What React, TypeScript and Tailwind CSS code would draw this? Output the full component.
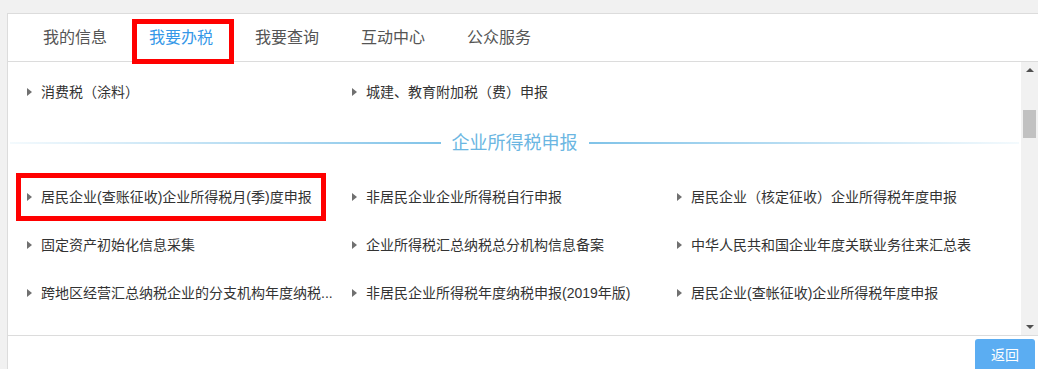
import React from "react";

const font = { fontFamily: '"Liberation Sans", "Noto Sans CJK SC", sans-serif' };

const tabs = ["我的信息", "我要办税", "我要查询", "互动中心", "公众服务"];

function Arrow() {
  return (
    <span className="w-0 h-0 shrink-0 border-y-[4px] border-y-transparent border-l-[5px] border-l-[#707070]" />
  );
}

function Cell({ text, marked = false }: { text: string; marked?: boolean }) {
  return (
    <div className="relative h-[48px] w-[310px] flex items-center pl-[11px] gap-[9px]">
      <Arrow />
      <span className="whitespace-nowrap text-[14px] text-[#333]">{text}</span>
      {marked && <span className="absolute inset-0 border-[5px] border-[#f00]" />}
    </div>
  );
}

function Row({ items, marked }: { items: string[]; marked?: number }) {
  return (
    <div className="grid grid-cols-[310px_310px_310px] gap-x-[15px] pl-[8px]">
      {items.map((t, i) => (
        <Cell key={i} text={t} marked={marked === i} />
      ))}
    </div>
  );
}

function Divider({ title }: { title: string }) {
  return (
    <div className="h-[54px] mb-[3px] flex items-center gap-[11px] px-[2px]">
      <div className="flex-1 h-[2px] bg-gradient-to-r from-[#f4fafd] to-[#80c3e8]" />
      <span className="text-[18px] text-[#6bb6e2]">{title}</span>
      <div className="flex-1 h-[2px] bg-gradient-to-r from-[#80c3e8] to-[#f4fafd]" />
    </div>
  );
}

function Scrollbar() {
  return (
    <div className="w-[17px] shrink-0 bg-[#f1f1f1] flex flex-col items-center">
      <span className="mt-[6px] w-0 h-0 border-x-[4px] border-x-transparent border-b-[4px] border-b-[#505050]" />
      <div className="mt-[38px] w-[13px] h-[28px] bg-[#c1c1c1]" />
      <div className="flex-1" />
      <span className="mb-[6px] w-0 h-0 border-x-[4px] border-x-transparent border-t-[4px] border-t-[#505050]" />
    </div>
  );
}

export default function App() {
  return (
    <div className="h-[369px] bg-[#f1f1f1] pt-[13px] pl-[7px] overflow-hidden" style={font}>
      <div className="bg-white border-l border-t border-[#dcdcdc] w-[1031px] h-[356px] flex flex-col">
        <div className="h-[48px] shrink-0 border-b border-[#dcdcdc] flex pl-[14px]">
          {tabs.map((t, i) => (
            <div
              key={t}
              className={
                i === 1
                  ? "relative px-[21px] flex items-center text-[16px] text-[#3598e8]"
                  : "relative px-[21px] flex items-center text-[16px] text-[#555]"
              }
            >
              {t}
              {i === 1 && (
                <span className="absolute left-[4px] right-0 top-[5px] h-[45px] border-[5px] border-[#f00]" />
              )}
            </div>
          ))}
        </div>

        <div className="h-[274px] shrink-0 border-b border-[#dcdcdc] flex overflow-hidden">
          <div className="flex-1 pt-[6px] overflow-hidden">
            <Row items={["消费税（涂料）", "城建、教育附加税（费）申报"]} />
            <Divider title="企业所得税申报" />
            <Row
              marked={0}
              items={[
                "居民企业(查账征收)企业所得税月(季)度申报",
                "非居民企业企业所得税自行申报",
                "居民企业（核定征收）企业所得税年度申报",
              ]}
            />
            <Row
              items={[
                "固定资产初始化信息采集",
                "企业所得税汇总纳税总分机构信息备案",
                "中华人民共和国企业年度关联业务往来汇总表",
              ]}
            />
            <Row
              items={[
                "跨地区经营汇总纳税企业的分支机构年度纳税...",
                "非居民企业所得税年度纳税申报(2019年版)",
                "居民企业(查帐征收)企业所得税年度申报",
              ]}
            />
          </div>
          <Scrollbar />
        </div>

        <div className="flex-1 flex justify-end items-start pr-[3px] pt-[3px]">
          <button className="w-[60px] h-[32px] rounded-t-[3px] bg-[#5badf2] text-white text-[14px]">
            返回
          </button>
        </div>
      </div>
    </div>
  );
}
